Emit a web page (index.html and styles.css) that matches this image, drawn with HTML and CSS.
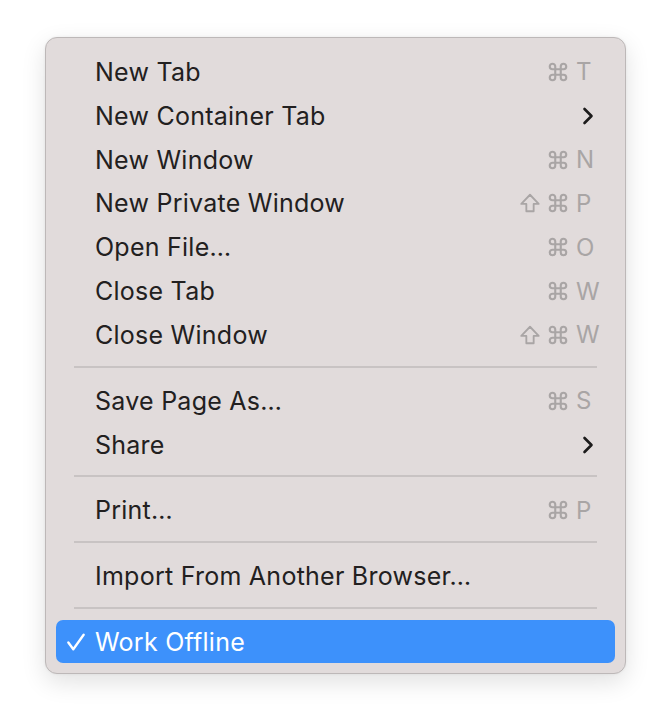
FILE: index.html
```html
<!DOCTYPE html>
<html>
<head>
<meta charset="utf-8">
<link rel="stylesheet" href="styles.css">
</head>
<body>
<svg width="0" height="0" class="defs">
  <defs>
    <symbol id="cmd" viewBox="0 0 24 24"><path d="M15 6v12a3 3 0 1 0 3-3H6a3 3 0 1 0 3 3V6a3 3 0 1 0-3 3h12a3 3 0 1 0-3-3" fill="none" stroke="currentColor" stroke-width="2.3" stroke-linejoin="round"/></symbol>
    <symbol id="shift" viewBox="0 0 24 24"><path d="M8 21v-8H2.5L12 3l9.5 10H16v8z" fill="none" stroke="currentColor" stroke-width="2" stroke-linejoin="round"/></symbol>
    <symbol id="chev" viewBox="0 0 12 18"><path d="M2.5 2l7 7-7 7" fill="none" stroke="currentColor" stroke-width="2.6" stroke-linecap="round" stroke-linejoin="round"/></symbol>
  </defs>
</svg>
<div class="menu">
  <div class="row"><span class="label">New Tab</span><span class="keys"><span class="mod"></span><svg class="ic"><use href="#cmd"/></svg><span class="key">T</span></span></div>
  <div class="row"><span class="label">New Container Tab</span><svg class="chev"><use href="#chev"/></svg></div>
  <div class="row"><span class="label">New Window</span><span class="keys"><span class="mod"></span><svg class="ic"><use href="#cmd"/></svg><span class="key">N</span></span></div>
  <div class="row"><span class="label">New Private Window</span><span class="keys"><svg class="ic shift"><use href="#shift"/></svg><svg class="ic"><use href="#cmd"/></svg><span class="key">P</span></span></div>
  <div class="row"><span class="label">Open File…</span><span class="keys"><span class="mod"></span><svg class="ic"><use href="#cmd"/></svg><span class="key">O</span></span></div>
  <div class="row"><span class="label">Close Tab</span><span class="keys"><span class="mod"></span><svg class="ic"><use href="#cmd"/></svg><span class="key">W</span></span></div>
  <div class="row"><span class="label">Close Window</span><span class="keys"><svg class="ic shift"><use href="#shift"/></svg><svg class="ic"><use href="#cmd"/></svg><span class="key">W</span></span></div>
  <div class="sep"></div>
  <div class="row"><span class="label">Save Page As…</span><span class="keys"><span class="mod"></span><svg class="ic"><use href="#cmd"/></svg><span class="key">S</span></span></div>
  <div class="row"><span class="label">Share</span><svg class="chev"><use href="#chev"/></svg></div>
  <div class="sep"></div>
  <div class="row"><span class="label">Print…</span><span class="keys"><span class="mod"></span><svg class="ic"><use href="#cmd"/></svg><span class="key">P</span></span></div>
  <div class="sep"></div>
  <div class="row"><span class="label">Import From Another Browser…</span></div>
  <div class="sep"></div>
  <div class="row selected"><svg class="check" viewBox="0 0 20 20"><path d="M1.5 10.5l5.5 7.5L18.5 2" fill="none" stroke="currentColor" stroke-width="2.6" stroke-linecap="round" stroke-linejoin="round"/></svg><span class="label">Work Offline</span></div>
</div>
</body>
</html>
```

FILE: styles.css
```css
html, body {
  margin: 0;
  padding: 0;
  background: #ffffff;
}
body {
  width: 672px;
  height: 728px;
  overflow: hidden;
  font-family: Inter, "Noto Sans", "Liberation Sans", sans-serif;
}
.defs {
  position: absolute;
  width: 0;
  height: 0;
}
.menu {
  box-sizing: border-box;
  margin: 37px 0 0 45px;
  width: 581px;
  height: 637px;
  padding: 12px 10px 10px;
  background: #e1dbdb;
  border: 1px solid #bdb8b8;
  border-radius: 12px;
  box-shadow: 0 8px 24px rgba(0, 0, 0, 0.12), 0 0 3px rgba(0, 0, 0, 0.06);
  display: flex;
  flex-direction: column;
}
.row {
  position: relative;
  height: 44px;
  display: flex;
  align-items: center;
  padding: 0 16px 0 39px;
  color: #222020;
  font-size: 25px;
  letter-spacing: 0.25px;
}
.label {
  flex: 1;
}
.keys {
  display: flex;
  align-items: center;
  color: #a9a5a5;
}
.mod {
  width: 22px;
}
.ic {
  width: 22px;
  height: 22px;
  margin-right: 7px;
}
.ic.shift {
  margin-right: 6px;
}
.key {
  width: 23px;
  font-size: 24px;
  letter-spacing: 0;
}
.chev {
  width: 12px;
  height: 18px;
  color: #1c1b1b;
  margin-right: 5px;
}
.sep {
  height: 2px;
  background: #c8c3c3;
  margin: 9px 18px 11px;
}
.selected {
  background: #3d91fb;
  color: #ffffff;
  border-radius: 7px;
  height: 43px;
}
.check {
  position: absolute;
  left: 11px;
  top: 13px;
  width: 18px;
  height: 18px;
  color: #ffffff;
}
```
